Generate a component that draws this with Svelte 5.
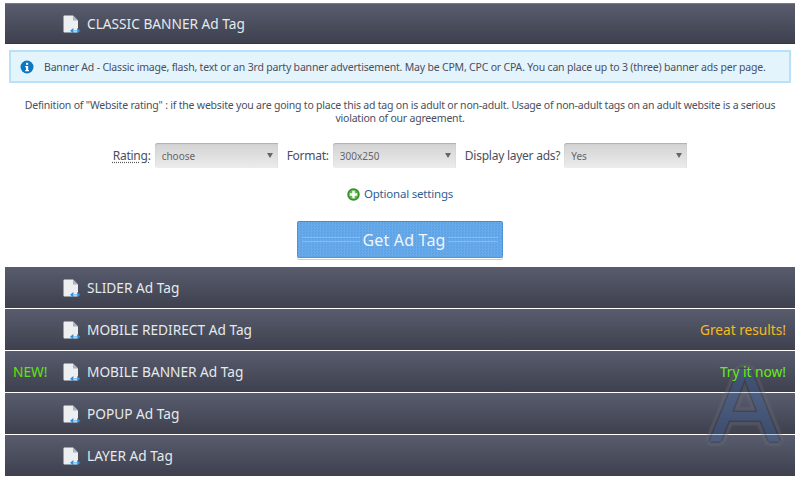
<script>
  const tags = [
    { name: 'SLIDER Ad Tag' },
    { name: 'MOBILE REDIRECT Ad Tag', note: 'Great results!', noteClass: 'gold' },
    { name: 'MOBILE BANNER Ad Tag', badge: 'NEW!', note: 'Try it now!', noteClass: 'lime' },
    { name: 'POPUP Ad Tag' },
    { name: 'LAYER Ad Tag' }
  ];

  const selects = [
    { label: 'Format:', value: '300x250' },
    { label: 'Display layer ads?', value: 'Yes' }
  ];
</script>

{#snippet docIcon()}
  <svg class="doc" width="18" height="20" viewBox="0 0 18 20">
    <path d="M0.5 2.5 Q0.5 1.5 1.5 1.5 H10 L15 6.5 V17.5 Q15 18.5 14 18.5 H1.5 Q0.5 18.5 0.5 17.5 Z" fill="#eceef0" />
    <path d="M10 1.5 L15 6.5 H10.5 Q10 6.5 10 6 Z" fill="#aeb2ba" />
    <path d="M7 16.8 L10.4 14 V19.6 Z M17.5 16.8 L14.1 14 V19.6 Z" fill="#2b8ddc" />
    <path d="M10 16.1 H14.5 V17.5 H10 Z" fill="#79c0f2" />
  </svg>
{/snippet}

<div class="page">
  <div class="bar top">
    <span class="badge"></span>
    {@render docIcon()}
    <span class="name">CLASSIC BANNER Ad Tag</span>
  </div>

  <div class="panel">
    <div class="notice">
      <svg class="info" width="14" height="14" viewBox="0 0 14 14">
        <circle cx="7" cy="7" r="6.5" fill="#0b76c4" />
        <rect x="6" y="2.8" width="2.2" height="2" fill="#fff" />
        <path d="M5.2 6 H8.2 V10 H9 V11.2 H5.2 V10 H6 V7.2 H5.2 Z" fill="#fff" />
      </svg>
      <span>Banner Ad - Classic image, flash, text or an 3rd party banner advertisement. May be CPM, CPC or CPA. You can place up to 3 (three) banner ads per page.</span>
    </div>

    <p class="definition">Definition of "Website rating" : if the website you are going to place this ad tag on is adult or non-adult. Usage of non-adult tags on an adult website is a serious violation of our agreement.</p>

    <div class="fields">
      <span class="label rating">Rating:</span>
      <div class="select"><select><option>choose</option></select></div>
      {#each selects as s}
        <span class="label">{s.label}</span>
        <div class="select"><select><option>{s.value}</option></select></div>
      {/each}
    </div>

    <a class="optional" href="#optional">
      <svg width="13" height="13" viewBox="0 0 13 13">
        <circle cx="6.5" cy="6.5" r="6.2" fill="#2f8f2a" />
        <circle cx="6.5" cy="6.5" r="4.8" fill="#5cb84a" />
        <path d="M5.3 2.8 H7.7 V5.3 H10.2 V7.7 H7.7 V10.2 H5.3 V7.7 H2.8 V5.3 H5.3 Z" fill="#fff" />
      </svg>
      Optional settings
    </a>

    <div class="action">
      <button class="get">
        <span class="rule left"></span>
        <span>Get Ad Tag</span>
        <span class="rule"></span>
      </button>
    </div>
  </div>

  <div class="list">
    {#each tags as tag}
      <div class="bar">
        <span class="badge">{tag.badge ?? ''}</span>
        {@render docIcon()}
        <span class="name">{tag.name}</span>
        {#if tag.note}
          <span class="note {tag.noteClass}">{tag.note}</span>
        {/if}
      </div>
    {/each}
    <div class="watermark">A</div>
  </div>
</div>

<style>
  :global(body) {
    margin: 0;
    background: #fff;
  }

  .page {
    width: 800px;
    height: 477px;
    padding: 3px 5px 0;
    box-sizing: border-box;
    overflow: hidden;
    font-family: "Noto Sans", sans-serif;
    color: #4a4f5e;
  }

  .bar {
    position: relative;
    display: flex;
    align-items: center;
    height: 41px;
    padding-right: 9px;
    box-sizing: border-box;
    background: linear-gradient(#585c6d, #3e404e);
    color: #e4eaee;
    font-size: 13.7px;
  }

  .bar.top {
    border-top: 1px solid #77797f;
    border-bottom: 1px solid #33353f;
  }

  .badge {
    width: 58px;
    padding-left: 8px;
    box-sizing: border-box;
    color: #5fe60c;
  }

  .doc {
    margin-right: 6px;
    flex: none;
  }

  .note {
    position: relative;
    z-index: 2;
    margin-left: auto;
  }

  .gold { color: #f5bc1c; }
  .lime { color: #66ee0e; }

  .panel {
    padding: 6px 4px 0;
  }

  .notice {
    display: flex;
    align-items: center;
    gap: 10px;
    height: 33px;
    box-sizing: border-box;
    padding-left: 9px;
    background: #e4f4fd;
    border: 2px solid #b9e2f8;
    font-size: 10.5px;
    letter-spacing: -0.19px;
    white-space: nowrap;
  }

  .info {
    flex: none;
  }

  .definition {
    margin: 16px 8px 0;
    text-align: center;
    font-size: 10.5px;
    letter-spacing: -0.21px;
    line-height: 13px;
  }

  .fields {
    display: flex;
    align-items: center;
    justify-content: center;
    gap: 4px;
    margin-top: 18px;
    font-size: 12px;
    letter-spacing: -0.25px;
  }

  .label {
    margin-left: 5px;
    white-space: nowrap;
  }

  .rating {
    margin-left: 0;
    text-decoration: underline dotted #555;
    text-underline-offset: 2px;
  }

  .select {
    position: relative;
    width: 123px;
    height: 25px;
  }

  .select::after {
    content: "";
    position: absolute;
    right: 5px;
    top: 10px;
    border-left: 3px solid transparent;
    border-right: 3px solid transparent;
    border-top: 5px solid #666;
  }

  select {
    appearance: none;
    width: 100%;
    height: 100%;
    padding: 0 7px;
    border: 0;
    border-radius: 3px 0 0 3px;
    background: linear-gradient(#d2d2d2, #ececec);
    box-shadow: inset 0 1px 1px #b0b0b0;
    color: #666;
    font: 10px "Noto Sans", sans-serif;
  }

  .optional {
    display: flex;
    align-items: center;
    justify-content: center;
    gap: 4px;
    margin-top: 17px;
    color: #31608f;
    font-size: 11.5px;
    letter-spacing: -0.2px;
    line-height: 18px;
    text-decoration: none;
  }

  .action {
    display: flex;
    justify-content: center;
    margin-top: 18px;
  }

  .get {
    display: flex;
    align-items: center;
    gap: 2px;
    width: 206px;
    height: 37px;
    padding: 0 4px;
    border: 1px solid #4f95dc;
    border-top-color: #3f8bd8;
    border-radius: 2px;
    background-color: #5ba2e6;
    background-image: repeating-conic-gradient(rgba(255, 255, 255, 0.1) 0 25%, transparent 0 50%);
    background-size: 3px 3px;
    box-shadow: 0 1px 0 #fff, 0 2px 0 #ccc;
    color: #eef5fc;
    font: 16px "Noto Sans", sans-serif;
    letter-spacing: 0.2px;
    white-space: nowrap;
  }

  .rule {
    flex: 50;
    height: 3px;
    border-top: 1px solid #86bbee;
    border-bottom: 1px solid #86bbee;
  }

  .rule.left {
    flex: 58;
  }

  .list {
    position: relative;
    display: flex;
    flex-direction: column;
    gap: 1px;
    margin-top: 9px;
  }

  /* faint site logo lying over the last bars */
  .watermark {
    position: absolute;
    z-index: 1;
    left: 705px;
    top: 86px;
    font: 104px/104px "Liberation Sans", sans-serif;
    color: #3a68ad;
    -webkit-text-stroke: 1px #3a68ad;
    opacity: 0.33;
    text-shadow:
      2px 0 1px #2e303c, -2px 0 1px #2e303c, 0 2px 1px #2e303c, 0 -2px 1px #2e303c,
      5px 0 2px #6e707c, -5px 0 2px #6e707c, 0 5px 2px #6e707c, 0 -5px 2px #6e707c,
      3.5px 3.5px 2px #6e707c, -3.5px 3.5px 2px #6e707c, 3.5px -3.5px 2px #6e707c, -3.5px -3.5px 2px #6e707c;
    filter: blur(0.7px);
    pointer-events: none;
  }
</style>
